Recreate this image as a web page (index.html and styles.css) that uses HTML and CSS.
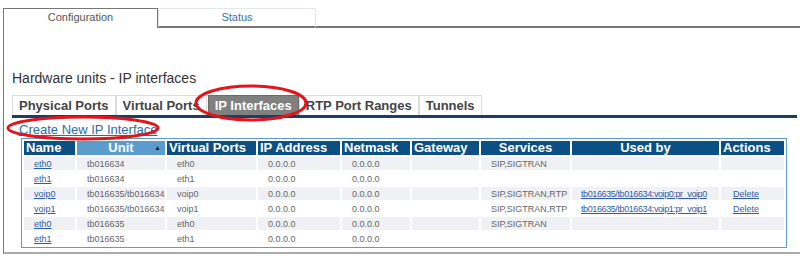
FILE: index.html
```html
<!DOCTYPE html>
<html lang="en">
<head>
  <meta charset="UTF-8" />
  <title>Hardware units - IP interfaces</title>
  <link rel="stylesheet" href="styles.css">
</head>
<body>
  <div class="page">
    <div class="main-tabs">
      <div class="main-tab active">Configuration</div>
      <div class="main-tab">Status</div>
      <div class="main-tab-fill"></div>
    </div>

    <div class="panel">
      <h1 class="title">Hardware units - IP interfaces</h1>

      <div class="sub-tabs">
        <div class="sub-tab">Physical Ports</div>
        <div class="sub-tab">Virtual Ports</div>
        <div class="sub-tab active">IP Interfaces</div>
        <div class="sub-tab">RTP Port Ranges</div>
        <div class="sub-tab">Tunnels</div>
      </div>

      <a href="#" class="create-link">Create New IP Interface</a>

      <div class="table-box">
        <table class="iface-table">
          <colgroup>
            <col class="c-name"><col class="c-unit"><col class="c-vport"><col class="c-ip">
            <col class="c-mask"><col class="c-gw"><col class="c-svc"><col class="c-used"><col class="c-act">
          </colgroup>
          <thead>
            <tr>
              <th>Name</th>
              <th class="sorted center">Unit <span class="sort-arrow">&#9650;</span></th>
              <th>Virtual Ports</th>
              <th>IP Address</th>
              <th>Netmask</th>
              <th>Gateway</th>
              <th class="center">Services</th>
              <th class="center">Used by</th>
              <th>Actions</th>
            </tr>
          </thead>
          <tbody>
            <tr>
              <td><a href="#">eth0</a></td><td>tb016634</td><td>eth0</td><td>0.0.0.0</td><td>0.0.0.0</td><td></td>
              <td>SIP,SIGTRAN</td><td></td><td></td>
            </tr>
            <tr>
              <td><a href="#">eth1</a></td><td>tb016634</td><td>eth1</td><td>0.0.0.0</td><td>0.0.0.0</td><td></td>
              <td></td><td></td><td></td>
            </tr>
            <tr>
              <td><a href="#">voip0</a></td><td>tb016635/tb016634</td><td>voip0</td><td>0.0.0.0</td><td>0.0.0.0</td><td></td>
              <td>SIP,SIGTRAN,RTP</td><td class="used"><a href="#">tb016635/tb016634:voip0:pr_voip0</a></td><td class="act"><a href="#">Delete</a></td>
            </tr>
            <tr>
              <td><a href="#">voip1</a></td><td>tb016635/tb016634</td><td>voip1</td><td>0.0.0.0</td><td>0.0.0.0</td><td></td>
              <td>SIP,SIGTRAN,RTP</td><td class="used"><a href="#">tb016635/tb016634:voip1:pr_voip1</a></td><td class="act"><a href="#">Delete</a></td>
            </tr>
            <tr>
              <td><a href="#">eth0</a></td><td>tb016635</td><td>eth0</td><td>0.0.0.0</td><td>0.0.0.0</td><td></td>
              <td>SIP,SIGTRAN</td><td></td><td></td>
            </tr>
            <tr>
              <td><a href="#">eth1</a></td><td>tb016635</td><td>eth1</td><td>0.0.0.0</td><td>0.0.0.0</td><td></td>
              <td></td><td></td><td></td>
            </tr>
          </tbody>
        </table>
      </div>
    </div>

    <!-- red annotation marks drawn over the screenshot -->
    <svg class="marks" width="800" height="259" viewBox="0 0 800 259">
      <ellipse cx="251" cy="103" rx="55" ry="17" />
      <ellipse cx="83" cy="128" rx="75" ry="11" />
    </svg>
  </div>
</body>
</html>
```

FILE: styles.css
```css
body {
  margin: 0;
  background: #fff;
  font-family: "Liberation Sans", Arial, sans-serif;
}
.page {
  position: relative;
  width: 800px;
  height: 259px;
  overflow: hidden;
  padding: 8px 0 0 3px;
  box-sizing: border-box;
}

/* top tabs */
.main-tabs {
  display: flex;
  height: 20px;
}
.main-tab {
  width: 155px;
  box-sizing: border-box;
  font-size: 11px;
  text-align: center;
  line-height: 17px;
  color: #555;
}
.main-tab.active {
  border: 1px solid #777;
  border-bottom: none;
}
.main-tab:not(.active) {
  width: 158px;
  color: #3a72b2;
  border: 1px solid #e2e6ec;
  border-bottom: 2px solid #777;
}
.main-tab-fill {
  flex: 1;
  border-bottom: 2px solid #777;
}

.panel {
  border-left: 1px solid #777;
  border-bottom: 2px solid #aaa;
  height: 226px;
  padding-left: 8px;
  box-sizing: border-box;
}
.title {
  margin: 0;
  padding-top: 42px;
  font-size: 14px;
  font-weight: normal;
  line-height: 16px;
  color: #333;
}

/* sub tabs */
.sub-tabs {
  display: flex;
  margin-top: 9px;
  height: 20px;
  border-bottom: 3px solid #1d3f5f;
  margin-right: 3px;
}
.sub-tab {
  padding: 0 6px;
  border: 1px solid #dcdcdc;
  border-bottom: none;
  font-size: 13px;
  font-weight: bold;
  line-height: 19px;
  color: #444;
}
.sub-tab.active {
  background: #808080;
  border-color: #6a6a6a;
  color: #fff;
  margin-left: 1px;
}

.create-link {
  display: inline-block;
  margin: 4px 0 0 7px;
  font-size: 13px;
  line-height: 16px;
  color: #2a6cb0;
}

/* table */
.table-box {
  margin: 0 7px 0 9px;
  border: 1px solid #5b9cc9;
  width: 766px;
  box-sizing: border-box;
}
.iface-table {
  border-spacing: 2px;
  table-layout: fixed;
  width: 100%;
}
.c-name { width: 51px; }
.c-unit { width: 88px; }
.c-vport { width: 89px; }
.c-ip { width: 82px; }
.c-mask { width: 68px; }
.c-gw { width: 67px; }
.c-svc { width: 89px; }
.c-used { width: 147px; }
.iface-table th {
  background: #0b4f85;
  color: #fff;
  font-size: 13px;
  font-weight: bold;
  text-align: left;
  padding: 0 2px;
  height: 14px;
  line-height: 14px;
  white-space: nowrap;
}
.iface-table th.center {
  text-align: center;
}
.iface-table th.sorted {
  background: #5b9ccc;
  position: relative;
}
.sort-arrow {
  position: absolute;
  right: 4px;
  top: 0;
  font-size: 7px;
  color: #123;
}
.iface-table td {
  height: 13px;
  padding: 0 0 0 10px;
  font-size: 9px;
  line-height: 12px;
  color: #666;
  white-space: nowrap;
  overflow: hidden;
}
.iface-table tbody tr:nth-child(odd) td {
  background: #f0f1f4;
}
.iface-table td.used {
  padding-left: 9px;
  letter-spacing: -0.4px;
}
.iface-table td.act {
  padding-left: 12px;
}
.iface-table a {
  color: #2a5ea8;
}

.marks {
  position: absolute;
  left: 0;
  top: 0;
  pointer-events: none;
}
.marks ellipse {
  fill: none;
  stroke: #e3141b;
  stroke-width: 3;
}
```
